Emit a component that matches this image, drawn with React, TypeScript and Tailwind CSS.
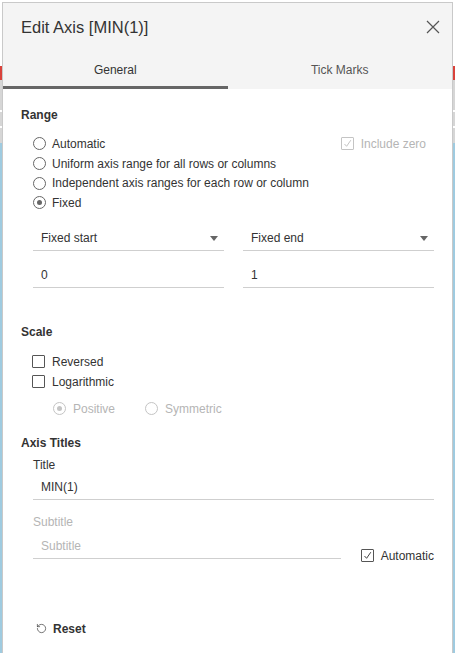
import { RotateCcw } from 'lucide-react';

function Radio({ checked = false, disabled = false }: { checked?: boolean; disabled?: boolean }) {
  return (
    <span
      className={`flex h-[13px] w-[13px] shrink-0 items-center justify-center rounded-full border bg-white ${
        disabled ? 'border-[#c4c4c4]' : 'border-[#666]'
      }`}
    >
      {checked && <span className={`h-[5px] w-[5px] rounded-full ${disabled ? 'bg-[#c4c4c4]' : 'bg-[#666]'}`} />}
    </span>
  );
}

function Checkbox({ checked = false, disabled = false }: { checked?: boolean; disabled?: boolean }) {
  return (
    <span
      className={`flex h-[13px] w-[13px] shrink-0 items-center justify-center rounded-[1px] border bg-white ${
        disabled ? 'border-[#c4c4c4]' : 'border-[#555]'
      }`}
    >
      {checked && (
        <svg width="9" height="9" viewBox="0 0 9 9" fill="none">
          <path d="M1.5 5 L3.6 7.3 L7.8 1.2" stroke={disabled ? '#c4c4c4' : '#444'} strokeWidth="1" />
        </svg>
      )}
    </span>
  );
}

function UnderlineField({ value, dropdown = false, muted = false }: { value: string; dropdown?: boolean; muted?: boolean }) {
  return (
    <div className="flex h-[24px] items-center justify-between border-b border-[#cfcfcf] pl-[8px] pr-[6px]">
      <span className={muted ? 'text-[#b5b5b5]' : 'text-[#333]'}>{value}</span>
      {dropdown && (
        <svg width="8" height="5" viewBox="0 0 8 5">
          <path d="M0 0 H8 L4 5 Z" fill="#666" />
        </svg>
      )}
    </div>
  );
}

export default function App() {
  const rangeOptions = [
    'Automatic',
    'Uniform axis range for all rows or columns',
    'Independent axis ranges for each row or column',
    'Fixed',
  ];

  return (
    <div className="relative h-[653px] w-[455px] overflow-hidden bg-white" style={{ fontFamily: '"Liberation Sans", Arial, sans-serif' }}>
      {/* page behind the dialog */}
      <div className="flex h-full flex-col">
        <div className="h-[66px] bg-white" />
        <div className="h-[14px] bg-[#d9423b]" />
        <div className="h-[30px] bg-[#d6d6d6]" />
        <div className="h-[2px] bg-white" />
        <div className="h-[14px] bg-[#d6d6d6]" />
        <div className="h-[2px] bg-white" />
        <div className="h-[15px] bg-[#d6d6d6]" />
        <div className="flex-1 bg-[#9fcbe0]" />
      </div>

      <div className="absolute left-[2px] top-[2px] flex h-[700px] w-[451px] flex-col border border-[#c9c9c9] bg-white text-[12px] text-[#333]">
        <div className="bg-[#f4f4f4]">
          <div className="flex h-[46px] items-center justify-between pl-[18px] pr-[12px] pt-[2px]">
            <span className="text-[16.5px] text-[#333]">Edit Axis [MIN(1)]</span>
            <svg width="14" height="14" viewBox="0 0 14 14">
              <path d="M1 1 L13 13 M13 1 L1 13" stroke="#555" strokeWidth="1.2" />
            </svg>
          </div>
          <div className="flex h-[40px]">
            <div className="flex flex-1 items-center justify-center border-b-[3px] border-[#666] pt-[5px] text-[#333]">General</div>
            <div className="flex flex-1 items-center justify-center border-b-[3px] border-transparent pt-[5px] text-[#555]">Tick Marks</div>
          </div>
        </div>

        <div className="flex flex-1 flex-col px-[18px] pt-[16px]">
          <div className="flex h-[20px] items-center font-bold">Range</div>

          <div className="mt-[9px] flex flex-col pl-[12px]">
            {rangeOptions.map((label, i) => (
              <div key={label} className="flex h-[19.7px] items-center">
                <Radio checked={i === 3} />
                <span className="ml-[6px]">{label}</span>
                {i === 0 && (
                  <div className="ml-auto mr-[8px] flex items-center text-[#b5b5b5]">
                    <Checkbox checked disabled />
                    <span className="ml-[7px]">Include zero</span>
                  </div>
                )}
              </div>
            ))}
          </div>

          <div className="mt-[14px] grid grid-cols-2 gap-x-[19px] gap-y-[13px] pl-[12px]">
            <UnderlineField value="Fixed start" dropdown />
            <UnderlineField value="Fixed end" dropdown />
            <UnderlineField value="0" />
            <UnderlineField value="1" />
          </div>

          <div className="mt-[34px] flex h-[20px] items-center font-bold">Scale</div>
          <div className="mt-[10px] flex flex-col pl-[11px]">
            <div className="flex h-[20px] items-center">
              <Checkbox />
              <span className="ml-[7px]">Reversed</span>
            </div>
            <div className="flex h-[20px] items-center">
              <Checkbox />
              <span className="ml-[7px]">Logarithmic</span>
            </div>
            <div className="mt-[7px] flex h-[20px] items-center pl-[21px] text-[#b5b5b5]">
              <Radio checked disabled />
              <span className="ml-[7px]">Positive</span>
              <span className="ml-[30px]">
                <Radio disabled />
              </span>
              <span className="ml-[7px]">Symmetric</span>
            </div>
          </div>

          <div className="mt-[14px] flex h-[20px] items-center font-bold">Axis Titles</div>
          <div className="flex flex-col pl-[12px]">
            <div className="mt-[2px] flex h-[20px] items-center">Title</div>
            <div className="mt-[1px]">
              <UnderlineField value="MIN(1)" />
            </div>
            <div className="mt-[12px] flex h-[20px] items-center text-[#b5b5b5]">Subtitle</div>
            <div className="mt-[3px] flex items-start">
              <div className="w-[309px]">
                <UnderlineField value="Subtitle" muted />
              </div>
              <div className="ml-[20px] mt-[11px] flex h-[20px] items-center">
                <Checkbox checked />
                <span className="ml-[7px]">Automatic</span>
              </div>
            </div>
          </div>

          <div className="mt-[53px] flex h-[20px] items-center pl-[15px] font-bold">
            <RotateCcw size={11} strokeWidth={1.6} color="#444" />
            <span className="ml-[6px]">Reset</span>
          </div>
        </div>
      </div>
    </div>
  );
}
